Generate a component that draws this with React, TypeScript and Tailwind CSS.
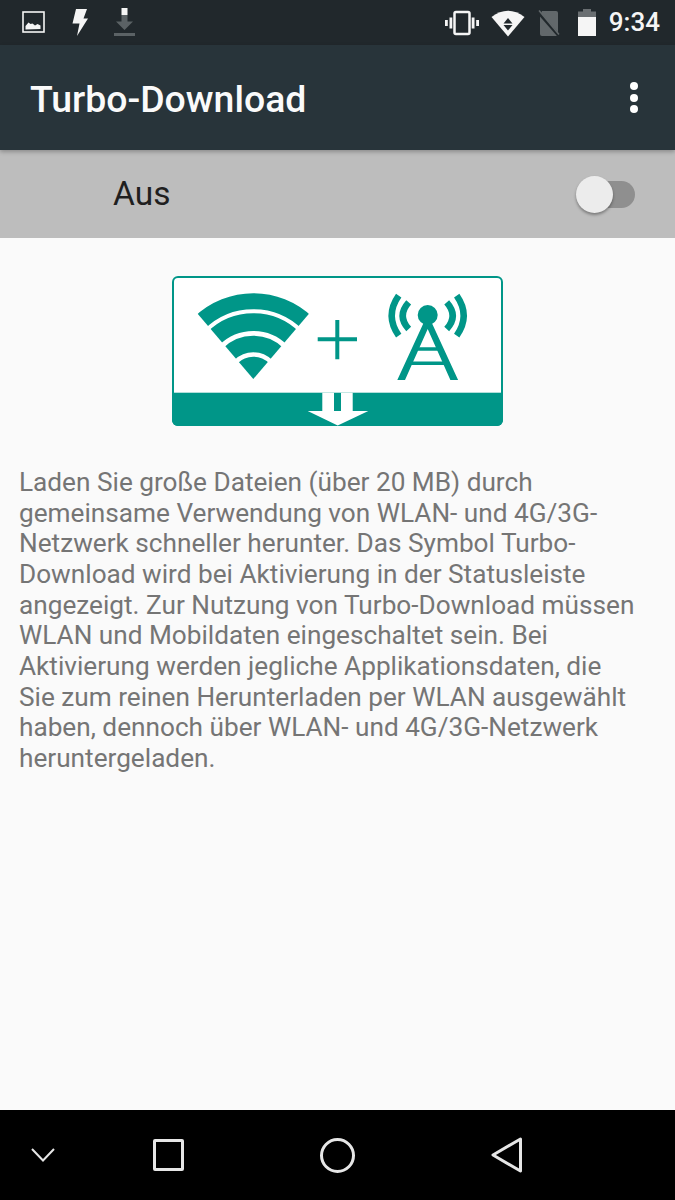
import React from "react";

const TEAL = "#009688";

const StatusLeft = () => (
  <div className="flex items-center">
    <svg width="24" height="24" viewBox="0 0 24 24" className="ml-[22px]">
      <rect x="1" y="1" width="21" height="20" fill="none" stroke="#f5f5f5" strokeWidth="1.6" />
      <path d="M3.500 18.500v-3.500l3-3.500 2 1.500 2-.5 2.500 2 2.500-1.500 3 1.500v3.500z" fill="#f5f5f5" />
    </svg>
    <svg width="18" height="28" viewBox="0 0 18 28" className="ml-[25px]">
      <path d="M5 0h11l-3.500 9.500H17L6 27l2.500-12.500H1.500z" fill="#f5f5f5" />
    </svg>
    <svg width="22" height="30" viewBox="0 0 22 30" className="ml-[25px]">
      <rect x="7.500" y="0" width="6" height="7" fill="#f5f5f5" />
      <path d="M7.500 7h6v6.500H19L10.500 22 2 13.500h5.500z" fill="#5b6265" />
      <rect x="0" y="25" width="21" height="3" fill="#5b6265" />
    </svg>
  </div>
);

const StatusRight = () => (
  <div className="flex items-center">
    <svg width="34" height="26" viewBox="0 0 34 26" className="mr-[12px]">
      <rect x="9.500" y="2" width="15" height="22" rx="1.500" fill="none" stroke="#f5f5f5" strokeWidth="2.500" />
      <rect x="4.500" y="7.500" width="2.800" height="11" fill="#f5f5f5" />
      <rect x="0" y="10" width="2.800" height="6" fill="#f5f5f5" />
      <rect x="26.700" y="7.500" width="2.800" height="11" fill="#f5f5f5" />
      <rect x="31.200" y="10" width="2.800" height="6" fill="#f5f5f5" />
    </svg>
    <svg width="34" height="28" viewBox="0 0 34 28" className="mr-[13px]">
      <path d="M0.500 8Q17 -4.500 33.500 8L17 27.500z" fill="#f5f5f5" />
      <path d="M17 9l4.500 5.500h-9z" fill="#21282c" />
      <path d="M12.500 16h9L17 21.500z" fill="#21282c" />
    </svg>
    <svg width="22" height="26" viewBox="0 0 22 26" className="mr-[18px]">
      <path d="M4 1h14a2 2 0 0 1 2 2v21a2 2 0 0 1-2 2H4a2 2 0 0 1-2-2V6z" fill="#62686b" />
      <path d="M0 2l21 24" stroke="#21282c" strokeWidth="3" />
      <path d="M1 0.500l20 24" stroke="#62686b" strokeWidth="1.500" />
    </svg>
    <svg width="18" height="27" viewBox="0 0 18 27" className="mr-[13px]">
      <path d="M5 0h8v2.500h5V27H0V2.500h5z" fill="#6a6f72" />
      <rect x="0" y="8" width="18" height="19" fill="#f5f5f5" />
    </svg>
    <span className="mr-[15px] text-[26px] font-medium text-[#f5f5f5]">9:34</span>
  </div>
);

const TurboBanner = () => (
  <svg width="331" height="150" viewBox="0 0 331 150" className="mx-auto block">
    <defs>
      <clipPath id="wedge">
        <path d="M81.300 103L-1 6.500H163.600z" />
      </clipPath>
      <clipPath id="panel">
        <rect width="331" height="150" rx="6" />
      </clipPath>
    </defs>
    <rect x="1" y="1" width="329" height="148" rx="5" fill="#fff" stroke={TEAL} strokeWidth="2" />
    <g clipPath="url(#wedge)" fill="none" stroke={TEAL}>
      <circle cx="81.300" cy="103" r="77.700" strokeWidth="16" />
      <circle cx="81.300" cy="103" r="56.850" strokeWidth="17.700" />
      <circle cx="81.300" cy="103" r="35" strokeWidth="16.600" />
      <circle cx="81.300" cy="103" r="11.150" strokeWidth="22.300" />
    </g>
    <path d="M145.700 63.300H185M165.300 44v39.300" stroke={TEAL} strokeWidth="4" fill="none" />
    <circle cx="255.700" cy="39" r="10" fill={TEAL} />
    <path
      d="M252 46L225.300 104H233L255.700 53L278.400 104H286.100L259.400 46z"
      fill={TEAL}
    />
    <path d="M243 73H268.400M236.800 87.300H274.600" stroke={TEAL} strokeWidth="3.500" fill="none" />
    <path
      d="M236.700 26.300Q224.700 39.700 236.700 53M226.700 19.700Q212.700 39.700 226.700 59.700M274.700 26.300Q286.700 39.700 274.700 53M284.700 19.700Q298.700 39.700 284.700 59.700"
      stroke={TEAL}
      strokeWidth="6.500"
      fill="none"
    />
    <g clipPath="url(#panel)">
      <rect x="0" y="116.700" width="331" height="34" fill={TEAL} />
    </g>
    <path d="M150.300 116.700H162V135H169V116.700H180.700V135H196.300L165.700 149.500L135.700 135H150.300z" fill="#fff" />
  </svg>
);

const NavBar = () => (
  <div className="flex h-[90px] shrink-0 items-center bg-black">
    <svg width="26" height="16" viewBox="0 0 26 16" className="ml-[30px]">
      <path d="M2 2l11 11.500L24 2" fill="none" stroke="#e6e6e6" strokeWidth="2" />
    </svg>
    <div className="ml-[97px] h-[32px] w-[31px] rounded-[2px] border-[3px] border-[#e6e6e6]" />
    <div className="ml-[136px] h-[35px] w-[35px] rounded-full border-[3px] border-[#e6e6e6]" />
    <svg width="32" height="36" viewBox="0 0 32 36" className="ml-[136px]">
      <path d="M29.500 2L2 18l27.500 16z" fill="none" stroke="#e6e6e6" strokeWidth="3" strokeLinejoin="round" />
    </svg>
  </div>
);

export default function App() {
  return (
    <div className="flex h-[1200px] w-[675px] flex-col overflow-hidden bg-[#fafafa] font-['Roboto',sans-serif]">
      <div className="flex h-[45px] shrink-0 items-center justify-between bg-[#21282c]">
        <StatusLeft />
        <StatusRight />
      </div>

      <div className="relative z-10 flex h-[105px] shrink-0 items-center justify-between bg-[#28343a] shadow-[0_2px_4px_rgba(0,0,0,0.25)]">
        <h1 className="mt-[4px] ml-[30px] text-[37.400px] leading-none font-medium text-[#fafafa]">Turbo-Download</h1>
        <div className="mr-[37px] flex flex-col gap-[3.500px]">
          <div className="h-[8px] w-[8px] rounded-full bg-white" />
          <div className="h-[8px] w-[8px] rounded-full bg-white" />
          <div className="h-[8px] w-[8px] rounded-full bg-white" />
        </div>
      </div>

      <div className="flex h-[88px] shrink-0 items-center justify-between bg-[#bdbdbd]">
        <span className="ml-[113px] text-[33.500px] text-[#1f1f1f]">Aus</span>
        <div className="relative mr-[40px] h-[27px] w-[57px] rounded-full bg-[#8f8f8f]">
          <div className="absolute top-[-5px] left-[-2px] h-[37px] w-[37px] rounded-full bg-[#ececec] shadow-[0_2px_3px_rgba(0,0,0,0.35)]" />
        </div>
      </div>

      <div className="flex-1 pt-[38px]">
        <TurboBanner />
        <p className="mt-[41px] px-[19px] text-[26.200px] leading-[30.650px] text-[#757575]">
          Laden Sie große Dateien (über 20 MB) durch
          <br />
          gemeinsame Verwendung von WLAN- und 4G/3G-
          <br />
          Netzwerk schneller herunter. Das Symbol Turbo-
          <br />
          Download wird bei Aktivierung in der Statusleiste
          <br />
          angezeigt. Zur Nutzung von Turbo-Download müssen
          <br />
          WLAN und Mobildaten eingeschaltet sein. Bei
          <br />
          Aktivierung werden jegliche Applikationsdaten, die
          <br />
          Sie zum reinen Herunterladen per WLAN ausgewählt
          <br />
          haben, dennoch über WLAN- und 4G/3G-Netzwerk
          <br />
          heruntergeladen.
        </p>
      </div>

      <NavBar />
    </div>
  );
}
